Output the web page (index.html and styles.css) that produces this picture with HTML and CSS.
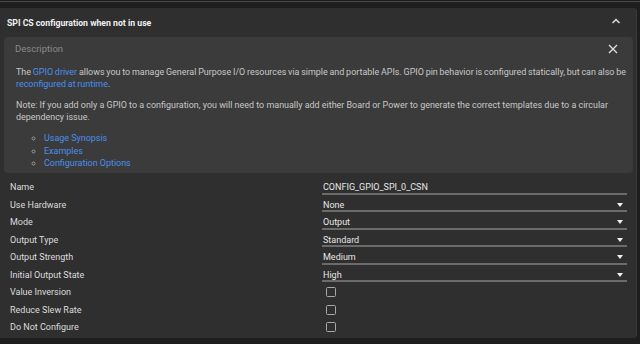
FILE: index.html
```html
<!DOCTYPE html>
<html lang="en">
<head>
  <meta charset="UTF-8">
  <title>SPI CS configuration</title>
  <link rel="stylesheet" href="styles.css">
</head>
<body>
  <div class="top-strip"></div>

  <div class="panel">
    <div class="panel-header">
      <span class="panel-title">SPI CS configuration when not in use</span>
      <svg class="chevron" width="10" height="6" viewBox="0 0 10 6">
        <path d="M1.5 5 L5 1.6 L8.5 5" fill="none" stroke="#d8d8d8" stroke-width="1.5"/>
      </svg>
    </div>

    <!-- Description box -->
    <div class="desc-box">
      <div class="desc-head">
        <span>Description</span>
        <svg class="close" width="10" height="10" viewBox="0 0 10 10">
          <path d="M1 1 L9 9 M9 1 L1 9" stroke="#e0e0e0" stroke-width="1.3"/>
        </svg>
      </div>
      <p class="intro">The <a href="#">GPIO driver</a> allows you to manage General Purpose I/O resources via simple and portable APIs. GPIO pin behavior is configured statically, but can also be <a href="#">reconfigured at runtime</a>.</p>
      <p>Note: If you add only a GPIO to a configuration, you will need to manually add either Board or Power to generate the correct templates due to a circular dependency issue.</p>
      <ul>
        <li><a href="#">Usage Synopsis</a></li>
        <li><a href="#">Examples</a></li>
        <li><a href="#">Configuration Options</a></li>
      </ul>
    </div>

    <!-- Settings -->
    <div class="settings">
      <div class="row">
        <span class="label">Name</span>
        <div class="field text-field">CONFIG_GPIO_SPI_0_CSN</div>
      </div>
      <div class="row">
        <span class="label">Use Hardware</span>
        <div class="field select">None<span class="caret"></span></div>
      </div>
      <div class="row">
        <span class="label">Mode</span>
        <div class="field select">Output<span class="caret"></span></div>
      </div>
      <div class="row">
        <span class="label">Output Type</span>
        <div class="field select">Standard<span class="caret"></span></div>
      </div>
      <div class="row">
        <span class="label">Output Strength</span>
        <div class="field select">Medium<span class="caret"></span></div>
      </div>
      <div class="row">
        <span class="label">Initial Output State</span>
        <div class="field select">High<span class="caret"></span></div>
      </div>
      <div class="row">
        <span class="label">Value Inversion</span>
        <div class="check-cell"><span class="checkbox"></span></div>
      </div>
      <div class="row">
        <span class="label">Reduce Slew Rate</span>
        <div class="check-cell"><span class="checkbox"></span></div>
      </div>
      <div class="row">
        <span class="label">Do Not Configure</span>
        <div class="check-cell"><span class="checkbox"></span></div>
      </div>
    </div>
  </div>
</body>
</html>
```

FILE: styles.css
```css
body {
  margin: 0;
  background-color: #1e1e1e;
  font-family: Roboto, "Liberation Sans", sans-serif;
  font-size: 9px;
  color: #dcdcdc;
  height: 344px;
  overflow: hidden;
}

.top-strip {
  height: 8px;
  border-top: 1px solid #1b1b1b;
  box-sizing: border-box;
  background: linear-gradient(#4a4a4a 0, #4a4a4a 1px, #1e1e1e 1px);
}

.panel {
  width: 637px;
  height: 330px;
  background-color: #2f2f2f;
  border-radius: 0 4px 4px 0;
  border-right: 1px solid #3a3a3a;
  box-sizing: border-box;
}

.panel-header {
  height: 29px;
  display: flex;
  align-items: center;
  justify-content: space-between;
  padding: 0 15px 0 7px;
}

.panel-title {
  font-weight: bold;
  font-size: 8.7px;
  color: #f0f0f0;
}

.chevron {
  margin-top: -3px;
}

/* Description box */
.desc-box {
  margin: 0 3px 0 4px;
  background-color: #3b3b3b;
  border-radius: 4px;
  padding: 6px 2px 3px 11px;
  color: #c8c8c8;
  font-size: 8.95px;
  line-height: 12px;
}

.desc-head {
  display: flex;
  justify-content: space-between;
  align-items: center;
  color: #8a8a8a;
  font-size: 9.5px;
}

.desc-head .close {
  margin-right: 13px;
}

.desc-box p {
  margin: 11px 0 0 1px;
}

.desc-box p.intro {
  word-spacing: -0.45px;
}

.desc-box p + p {
  margin-top: 9px;
}

.desc-box a {
  color: #4a8fec;
  text-decoration: none;
}

.desc-box ul {
  margin: 9px 0 0 0;
  padding-left: 29px;
  list-style-type: circle;
  line-height: 12.5px;
}

.desc-box li::marker {
  color: #9a9a9a;
}

/* Settings rows */
.settings {
  padding: 6px 10px 0 10px;
}

.row {
  display: grid;
  grid-template-columns: 312px 305px;
  height: 17.5px;
  align-items: center;
}

.label {
  color: #dcdcdc;
}

.field {
  height: 15px;
  display: flex;
  align-items: center;
  justify-content: space-between;
  padding: 2px 4px 0 1px;
  border-bottom: 2px solid #6b6b6b;
  box-sizing: border-box;
  color: #e6e6e6;
}

.caret {
  width: 0;
  height: 0;
  border-left: 3.5px solid transparent;
  border-right: 3.5px solid transparent;
  border-top: 4px solid #f0f0f0;
}

.check-cell {
  display: flex;
  align-items: center;
  padding-left: 4px;
}

.checkbox {
  width: 8px;
  height: 8px;
  border: 1.5px solid #a8a8a8;
  border-radius: 1.5px;
}
```
